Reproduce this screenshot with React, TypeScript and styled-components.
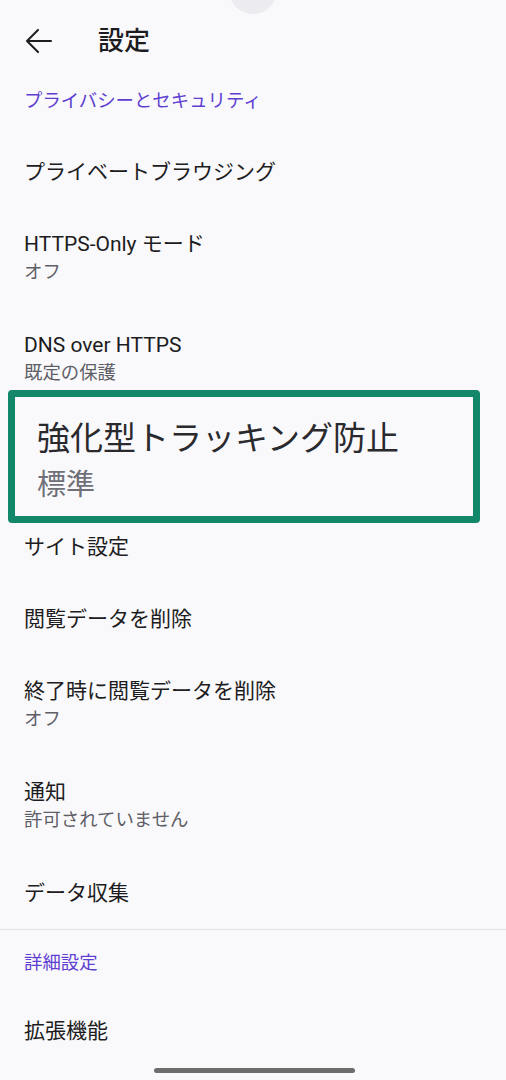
import React from "react";
import styled, { createGlobalStyle } from "styled-components";

const GlobalStyle = createGlobalStyle`
  html, body {
    margin: 0;
    padding: 0;
    background: #f9f9fb;
  }
  body {
    font-family: Roboto, "Noto Sans CJK JP", "Noto Sans", sans-serif;
    -webkit-font-smoothing: antialiased;
  }
`;

const Page = styled.div`
  position: relative;
  width: 506px;
  height: 1080px;
  overflow: hidden;
  background: #f9f9fb;
`;

const Camera = styled.div`
  position: absolute;
  left: 229px;
  top: -34px;
  width: 48px;
  height: 48px;
  border-radius: 50%;
  background: #ececf0;
`;

const Toolbar = styled.header`
  display: flex;
  align-items: center;
  height: 82px;
  padding-left: 25px;
  box-sizing: border-box;
`;

const BackButton = styled.button`
  display: flex;
  align-items: center;
  justify-content: center;
  width: 28px;
  height: 28px;
  padding: 0;
  border: none;
  background: transparent;
  color: #1d1c21;
`;

const Title = styled.h1`
  margin: 0 0 0 45px;
  font-size: 26px;
  line-height: 32px;
  font-weight: 500;
  color: #1d1c21;
`;

const Category = styled.div<{ $top: number; $height: number }>`
  box-sizing: border-box;
  height: ${(p) => p.$height}px;
  padding: ${(p) => p.$top}px 0 0 24px;
  font-size: 18.4px;
  line-height: 22px;
  color: #5f3fd2;
`;

const Row = styled.div`
  position: relative;
  display: flex;
  flex-direction: column;
  padding: 24px 24px 20px;
  box-sizing: border-box;
`;

const RowTitle = styled.div<{ $hidden?: boolean }>`
  font-size: 21px;
  line-height: 28px;
  color: #1d1c21;
  white-space: nowrap;
  visibility: ${(p) => (p.$hidden ? "hidden" : "visible")};
`;

const RowSummary = styled.div<{ $hidden?: boolean }>`
  font-size: 18.4px;
  line-height: 28px;
  padding-bottom: 1px;
  color: #5e5e66;
  white-space: nowrap;
  visibility: ${(p) => (p.$hidden ? "hidden" : "visible")};
`;

const Highlight = styled.div`
  position: absolute;
  left: 8px;
  top: -18px;
  width: 472px;
  height: 133px;
  box-sizing: border-box;
  border: 7px solid #13876a;
  border-radius: 4px;
  background: #f9f9fb;
  padding: 22px 0 0 22px;
`;

const HighlightTitle = styled.div`
  font-size: 33px;
  line-height: 40px;
  color: #2a2a2e;
  white-space: nowrap;
`;

const HighlightSummary = styled.div`
  margin-top: 6px;
  font-size: 29px;
  line-height: 40px;
  color: #707078;
  white-space: nowrap;
`;

const Divider = styled.hr`
  margin: 2px 0 0;
  border: none;
  border-top: 1px solid #e2e2e6;
`;

const HomeBar = styled.div`
  position: absolute;
  left: 154px;
  bottom: 7px;
  width: 201px;
  height: 5px;
  border-radius: 3px;
  background: #6d6d6d;
`;

const ArrowBack = () => (
  <svg width="28" height="24" viewBox="0 0 28 24" fill="none">
    <path
      d="M26 12H2M13 1L2 12l11 11"
      stroke="currentColor"
      strokeWidth="2"
      strokeLinecap="round"
      strokeLinejoin="round"
    />
  </svg>
);

type Item = { title: string; summary?: string };

const Pref = ({ title, summary }: Item) => (
  <Row>
    <RowTitle>{title}</RowTitle>
    {summary && <RowSummary>{summary}</RowSummary>}
  </Row>
);

const HighlightedPref = ({ title, summary }: Item) => (
  <Row>
    <RowTitle $hidden aria-hidden>
      {title}
    </RowTitle>
    <RowSummary $hidden aria-hidden>
      {summary}
    </RowSummary>
    <Highlight>
      <HighlightTitle>{title}</HighlightTitle>
      <HighlightSummary>{summary}</HighlightSummary>
    </Highlight>
  </Row>
);

export default function App() {
  return (
    <>
      <GlobalStyle />
      <Page>
        <Camera />
        <Toolbar>
          <BackButton aria-label="戻る">
            <ArrowBack />
          </BackButton>
          <Title>設定</Title>
        </Toolbar>
        <Category $top={8} $height={52}>
          プライバシーとセキュリティ
        </Category>
        <Pref title="プライベートブラウジング" />
        <Pref title="HTTPS-Only モード" summary="オフ" />
        <Pref title="DNS over HTTPS" summary="既定の保護" />
        <HighlightedPref title="強化型トラッキング防止" summary="標準" />
        <Pref title="サイト設定" />
        <Pref title="閲覧データを削除" />
        <Pref title="終了時に閲覧データを削除" summary="オフ" />
        <Pref title="通知" summary="許可されていません" />
        <Pref title="データ収集" />
        <Divider />
        <Category $top={22} $height={63}>
          詳細設定
        </Category>
        <Pref title="拡張機能" />
        <HomeBar />
      </Page>
    </>
  );
}
